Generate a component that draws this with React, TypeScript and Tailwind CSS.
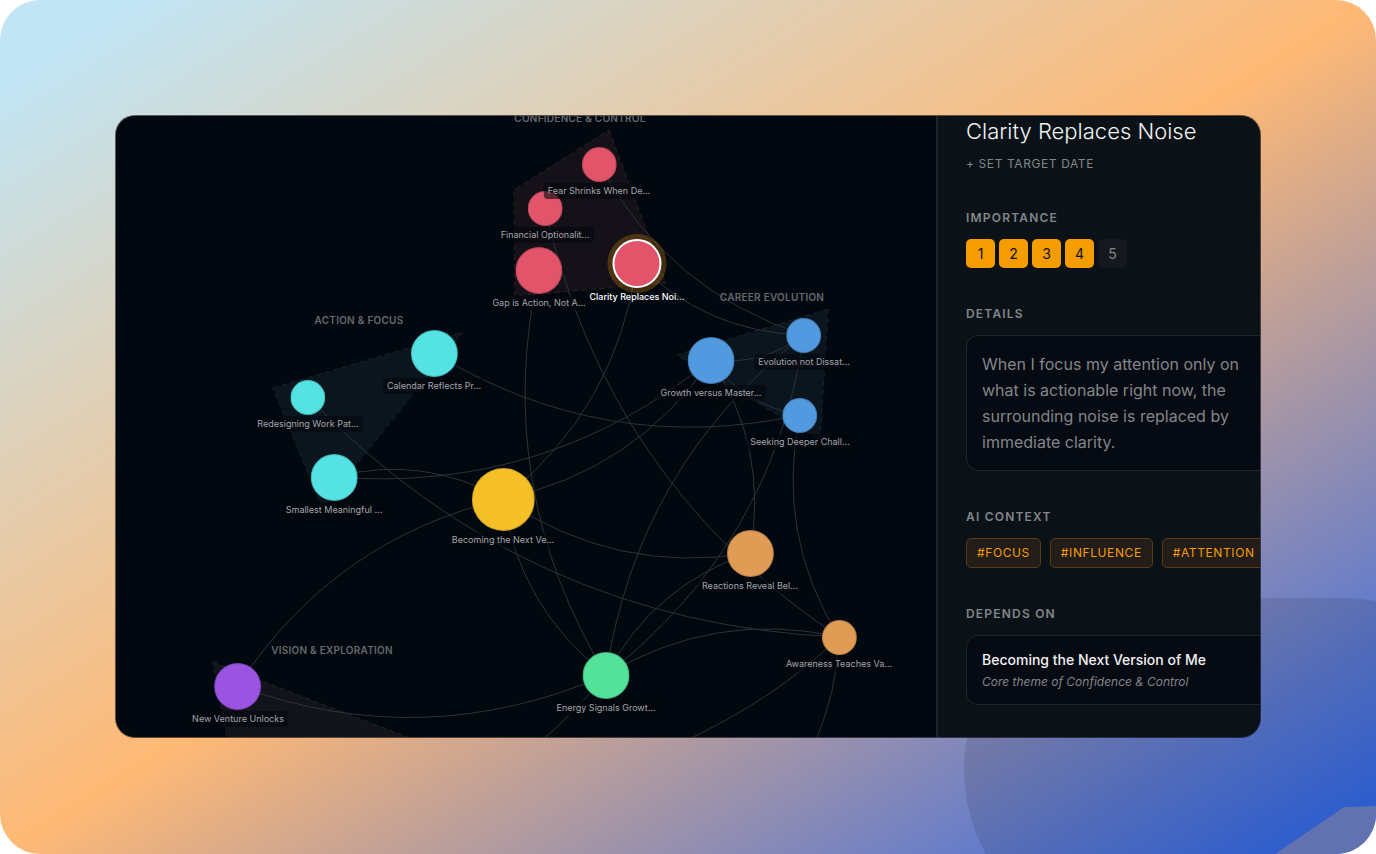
import React, { useState } from 'react';
import clsx from 'clsx';

interface GraphNode {
  id: string;
  label: string;
  x: number;
  y: number;
  size: number;
  color: string;
}

const RED = '#e1546a';
const CYAN = '#54e2e2';
const BLUE = '#529ae0';
const ORANGE = '#e09b54';

const NODES: GraphNode[] = [
  { id: 'financial', label: 'Financial Optionalit...', x: 429, y: 92, size: 35, color: RED },
  { id: 'fear', label: 'Fear Shrinks When De...', x: 483, y: 48, size: 35, color: RED },
  { id: 'gap', label: 'Gap is Action, Not A...', x: 423, y: 154, size: 47, color: RED },
  { id: 'clarity', label: 'Clarity Replaces Noi...', x: 521, y: 147, size: 49, color: RED },
  { id: 'calendar', label: 'Calendar Reflects Pr...', x: 318, y: 237, size: 47, color: CYAN },
  { id: 'redesign', label: 'Redesigning Work Pat...', x: 192, y: 281, size: 35, color: CYAN },
  { id: 'smallest', label: 'Smallest Meaningful ...', x: 218, y: 361, size: 47, color: CYAN },
  { id: 'growth', label: 'Growth versus Master...', x: 595, y: 244, size: 47, color: BLUE },
  { id: 'evolution', label: 'Evolution not Dissat...', x: 688, y: 219, size: 35, color: BLUE },
  { id: 'seeking', label: 'Seeking Deeper Chall...', x: 684, y: 299, size: 35, color: BLUE },
  { id: 'becoming', label: 'Becoming the Next Ve...', x: 387, y: 383, size: 63, color: '#f5c027' },
  { id: 'reactions', label: 'Reactions Reveal Bel...', x: 634, y: 437, size: 47, color: ORANGE },
  { id: 'awareness', label: 'Awareness Teaches Va...', x: 723, y: 521, size: 35, color: ORANGE },
  { id: 'energy', label: 'Energy Signals Growt...', x: 490, y: 559, size: 47, color: '#54e29b' },
  { id: 'venture', label: 'New Venture Unlocks', x: 122, y: 570, size: 47, color: '#9b54e2' },
];

const EDGES: [string, string][] = [
  ['becoming', 'reactions'],
  ['becoming', 'smallest'],
  ['becoming', 'growth'],
  ['becoming', 'clarity'],
  ['becoming', 'energy'],
  ['becoming', 'venture'],
  ['calendar', 'seeking'],
  ['venture', 'energy'],
  ['smallest', 'growth'],
  ['gap', 'energy'],
  ['financial', 'awareness'],
  ['redesign', 'awareness'],
  ['awareness', 'energy'],
  ['fear', 'evolution'],
  ['clarity', 'evolution'],
  ['growth', 'evolution'],
  ['growth', 'seeking'],
  ['evolution', 'energy'],
  ['energy', 'evolution'],
  ['reactions', 'growth'],
  ['reactions', 'energy'],
  ['seeking', 'awareness'],
];

// Edges whose other end is below the visible part of the canvas
const OPEN_EDGES = [
  'M723 521 Q722 574 696 634',
  'M723 521 Q658 585 560 629',
  'M490 559 Q461 594 420 630',
];

const CLUSTERS = [
  { name: 'CONFIDENCE & CONTROL', x: 464, y: 2, points: '493,14 550,167 399,180 398,74', fill: '#151118', stroke: '#2c2320' },
  { name: 'ACTION & FOCUS', x: 243, y: 204, points: '157,272 347,216 206,391', fill: '#0b151d', stroke: '#1c2429' },
  { name: 'CAREER EVOLUTION', x: 656, y: 181, points: '712,193 704,324 561,239', fill: '#0b151d', stroke: '#1c2429' },
  { name: 'VISION & EXPLORATION', x: 216, y: 534, points: '97,546 330,636 118,660', fill: '#13131b', stroke: '#20222a' },
];

const TAGS = ['#FOCUS', '#INFLUENCE', '#ATTENTION'];

const CURVE = 0.2;

const findNode = (id: string) => NODES.find((node) => node.id === id)!;

const edgePath = ([from, to]: [string, string]) => {
  const a = findNode(from);
  const b = findNode(to);
  const cx = (a.x + b.x) / 2 - (b.y - a.y) * CURVE;
  const cy = (a.y + b.y) / 2 + (b.x - a.x) * CURVE;
  return `M${a.x} ${a.y} Q${cx} ${cy} ${b.x} ${b.y}`;
};

const GoalGraph: React.FC = () => {
  const [selected, setSelected] = useState('clarity');

  return (
    <div className="relative min-w-0 flex-1 overflow-hidden bg-[#02080f]">
      <svg className="absolute inset-0 h-full w-full" aria-hidden="true">
        {CLUSTERS.map((cluster) => (
          <polygon
            key={cluster.name}
            points={cluster.points}
            fill={cluster.fill}
            stroke={cluster.stroke}
            strokeDasharray="5 4"
            strokeLinejoin="round"
          />
        ))}
        <g fill="none" stroke="#303139">
          {EDGES.map((edge) => (
            <path key={edge.join('-')} d={edgePath(edge)} />
          ))}
          {OPEN_EDGES.map((d) => (
            <path key={d} d={d} />
          ))}
        </g>
      </svg>

      {CLUSTERS.map((cluster) => (
        <span
          key={cluster.name}
          className="absolute -translate-x-1/2 -translate-y-1/2 text-[10px] leading-3 font-semibold tracking-wide whitespace-nowrap text-[#66696e]"
          style={{ left: cluster.x, top: cluster.y }}
        >
          {cluster.name}
        </span>
      ))}

      {/* Nodes */}
      {NODES.map((node) => {
        const isSelected = node.id === selected;
        return (
          <button
            key={node.id}
            type="button"
            onClick={() => setSelected(node.id)}
            className="absolute flex -translate-x-1/2 flex-col items-center gap-px"
            style={{ left: node.x, top: node.y - Math.floor(node.size / 2) }}
          >
            <span
              className={clsx(
                'rounded-full',
                isSelected
                  ? 'border-2 border-white ring-5 ring-[#f59e0b]/25'
                  : 'border border-black/20'
              )}
              style={{ width: node.size, height: node.size, backgroundColor: node.color }}
            />
            <span
              className={clsx(
                'rounded-sm px-1 text-[9px] leading-4 whitespace-nowrap',
                isSelected ? 'font-medium text-white' : 'bg-[#03070e]/60 text-[#a5a6a9]'
              )}
            >
              {node.label}
            </span>
          </button>
        );
      })}
    </div>
  );
};

const SectionTitle: React.FC<{ children: React.ReactNode; htmlFor?: string }> = ({ children, htmlFor }) => {
  const className = 'mb-[13px] block text-xs leading-4 font-semibold tracking-widest text-[#838689]';
  return htmlFor ? (
    <label htmlFor={htmlFor} className={className}>{children}</label>
  ) : (
    <h3 className={className}>{children}</h3>
  );
};

const DetailPanel: React.FC = () => {
  const [importance, setImportance] = useState(4);

  return (
    <aside className="w-[324px] shrink-0 overflow-hidden border-l-2 border-[#202329] bg-[#0a1218] pb-8 pl-7">
      <div className="flex w-[306px] flex-col gap-[38px]">
        <header>
          <h2 className="text-[22px] leading-[30px] font-light text-[#f1f2f2]">Clarity Replaces Noise</h2>
          <button type="button" className="mt-[10px] block text-xs leading-4 tracking-wider text-[#838689]">
            + SET TARGET DATE
          </button>
        </header>

        <section>
          <SectionTitle>IMPORTANCE</SectionTitle>
          <div className="flex gap-1">
            {[1, 2, 3, 4, 5].map((level) => (
              <button
                key={level}
                type="button"
                onClick={() => setImportance(level)}
                className={clsx(
                  'size-[29px] rounded-[5px] text-sm',
                  level <= importance ? 'bg-[#f59c00] text-[#0a1218]' : 'bg-[#15181f] text-[#838689]'
                )}
              >
                {level}
              </button>
            ))}
          </div>
        </section>

        <section>
          <SectionTitle htmlFor="details">DETAILS</SectionTitle>
          <textarea
            id="details"
            rows={4}
            className="block w-full resize-none overflow-hidden rounded-xl border border-[#22252b] bg-[#060a12] p-[15px] text-base leading-[26px] text-[#838689] outline-none"
            defaultValue="When I focus my attention only on what is actionable right now, the surrounding noise is replaced by immediate clarity."
          />
        </section>

        <section>
          <SectionTitle>AI CONTEXT</SectionTitle>
          <ul className="flex gap-[9px]">
            {TAGS.map((tag) => (
              <li
                key={tag}
                className="rounded-[5px] border border-[#5a3a18] bg-[#221d18] px-[10px] text-xs leading-7 tracking-wider text-[#f59c00]"
              >
                {tag}
              </li>
            ))}
          </ul>
        </section>

        <section>
          <SectionTitle>DEPENDS ON</SectionTitle>
          <div className="rounded-xl border border-[#22252b] bg-[#060a12] px-[15px] py-3">
            <p className="text-sm leading-6 font-medium text-[#f1f2f2]">Becoming the Next Version of Me</p>
            <p className="text-xs leading-5 text-[#838689] italic">Core theme of Confidence &amp; Control</p>
          </div>
        </section>
      </div>
    </aside>
  );
};

export default function App() {
  return (
    <div className="bg-white font-[Inter,'Liberation_Sans',sans-serif]">
      <main className="relative flex min-h-screen flex-col overflow-hidden rounded-[40px] bg-[linear-gradient(to_bottom_right,#c1e5f5_5%,#ffb975_50%,#3268e6_97%)] px-[115px] pt-[115px] pb-[116px]">
        <svg className="absolute right-0 bottom-0" width="412" height="256" aria-hidden="true">
          <rect width="552" height="344" rx="172" fill="#000" fillOpacity="0.1" />
          <polygon points="311,256 380,209 412,208 412,256" fill="#6272b1" />
        </svg>

        <div className="relative flex flex-1 overflow-hidden rounded-[20px] border border-black/60 bg-[#02080f] bg-clip-padding">
          <GoalGraph />
          <DetailPanel />
        </div>
      </main>
    </div>
  );
}
